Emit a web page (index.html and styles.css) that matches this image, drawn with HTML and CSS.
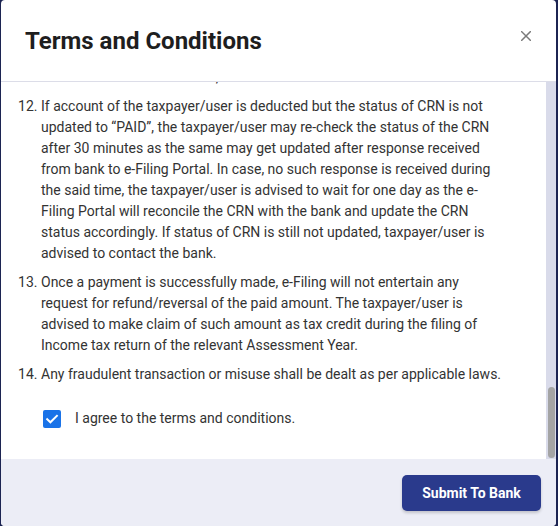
FILE: index.html
```html
<!DOCTYPE html>
<html lang="en">
<head>
<meta charset="utf-8">
<title>Terms and Conditions</title>
<link rel="stylesheet" href="styles.css">
</head>
<body>
<div class="dialog" role="dialog" aria-labelledby="dlg-title">
  <header class="dialog-header">
    <h2 id="dlg-title" class="dialog-title">Terms and Conditions</h2>
    <button class="close-btn" type="button" aria-label="Close">
      <svg width="10" height="10" viewBox="0 0 10 10" aria-hidden="true">
        <path d="M0.7 0.7 L9.3 9.3 M9.3 0.7 L0.7 9.3" stroke="currentColor" stroke-width="1.5" stroke-linecap="square" fill="none"/>
      </svg>
    </button>
  </header>

  <div class="dialog-main">
    <div class="dialog-body" id="terms-scroll">
      <div class="body-inner">
        <ol class="terms">
          <li>The e-Pay Tax service enables the taxpayer/user to generate a Challan Reference Number (CRN) and make payment of direct taxes online through Net Banking, Debit Card, Payment Gateway, RTGS/NEFT or over the counter at the branch of an authorised bank. The modes of payment available depend upon the bank selected by the taxpayer/user at the time of generating the challan form, and may be changed by the bank without prior notice. The list of authorised banks is displayed on the e-Filing Portal and is subject to revision from time to time.</li>
          <li>The taxpayer/user shall be solely responsible for the correctness of all the details furnished in the challan form, including PAN/TAN, name, Assessment Year, Major Head, Minor Head, the break-up of the tax amount into tax, surcharge, cess, interest, penalty, fee and others, and the mode of payment. Once the CRN is generated, these details cannot be modified, and the taxpayer/user is advised to verify them carefully before proceeding to payment. Any error in the details so furnished may result in the payment not being credited against the intended liability.</li>
          <li>The CRN generated on the e-Filing Portal is valid for a period of 15 days from the date of its generation. Payment against an expired CRN will not be accepted by the bank, and the taxpayer/user will be required to generate a fresh challan form and CRN for making the payment. A CRN once used for a successful payment cannot be used again for any other payment. All challans generated by the taxpayer/user can be viewed under the Generated Challans tab of e-Pay Tax.</li>
          <li>Where the taxpayer/user opts for payment through Net Banking or Debit Card, he/she will be redirected to the website of the selected bank. The e-Filing Portal does not store or have access to the login credentials, card details, one time passwords or any other banking information entered by the taxpayer/user on the website of the bank or of the payment gateway service provider. The taxpayer/user is advised to keep such credentials confidential and not to share them with any person.</li>
          <li>Charges, if any, levied by the bank or the payment gateway service provider for processing the payment shall be borne by the taxpayer/user. Such charges do not form part of the tax paid and will not be credited to the account of the taxpayer/user maintained with the Income Tax Department, nor will they be refunded under any circumstances.</li>
          <li>For payment through RTGS/NEFT, the taxpayer/user is required to take a print of the mandate form generated along with the CRN and submit it at the branch of any bank, or use it to make the payment through the net banking facility of any bank, before the expiry of the CRN. The amount transferred must be exactly the same as the amount mentioned in the challan form, and the beneficiary details must be entered as given in the mandate form. Payments made with a different amount or with incorrect beneficiary details will be returned by the bank.</li>
          <li>For payment over the counter, the taxpayer/user may make the payment in cash, cheque or demand draft at the branch of the selected authorised bank. Cash payment over the counter shall be permitted only up to the limit prescribed by the Income Tax Department from time to time. In the case of payment by cheque or demand draft, the date of payment shall be the date of realisation of the instrument, and the instrument must be presented before the expiry of the CRN.</li>
          <li>The payment shall be treated as made on the date on which the amount is debited from the account of the taxpayer/user and credited to the account of the Government, as reflected in the Challan Identification Number (CIN) generated by the bank. The CIN is the only valid proof of payment of tax and should be quoted in all correspondence relating to the payment.</li>
          <li>On successful payment, the challan receipt containing the CIN, BSR code, date of deposit and challan serial number will be available for download under the Payment History tab of e-Pay Tax. The same details may be used by the taxpayer/user while filing the Income tax return, responding to any notice or claiming credit of the tax paid. A copy of the challan receipt will also be sent to the registered e-mail ID of the taxpayer/user.</li>
          <li>The taxpayer/user is advised not to close the browser, press the back button or refresh the page while the payment is being processed, as this may result in the transaction being interrupted or the status of the CRN not being updated correctly on the e-Filing Portal. In case of any interruption, the taxpayer/user should check the status of the CRN before attempting a fresh payment.</li>
          <li>In case the payment is made from the account of a person other than the taxpayer/user, the tax so paid shall be credited only against the PAN/TAN mentioned in the challan form. No claim for credit of the amount to any other PAN/TAN shall be made to the Department, the details as stated in the above mentioned clause, shall be treated as final.</li>
          <li>If account of the taxpayer/user is deducted but the status of CRN is not updated to &ldquo;PAID&rdquo;, the taxpayer/user may re-check the status of the CRN after 30 minutes as the same may get updated after response received from bank to e-Filing Portal. In case, no such response is received during the said time, the taxpayer/user is advised to wait for one day as the e-Filing Portal will reconcile the CRN with the bank and update the CRN status accordingly. If status of CRN is still not updated, taxpayer/user is advised to contact the bank.</li>
          <li>Once a payment is successfully made, e-Filing will not entertain any request for refund/reversal of the paid amount. The taxpayer/user is advised to make claim of such amount as tax credit during the filing of Income tax return of the relevant Assessment Year.</li>
          <li>Any fraudulent transaction or misuse shall be dealt as per applicable laws.</li>
        </ol>

        <label class="agree">
          <span class="check-box" aria-hidden="true">
            <svg width="18" height="18" viewBox="0 0 18 18">
              <path d="M4.2 9.2 L7.4 12.3 L13.9 5.8" stroke="#fff" stroke-width="2" fill="none" stroke-linecap="square"/>
            </svg>
          </span>
          <span class="agree-text">I agree to the terms and conditions.</span>
        </label>
      </div>
    </div>
    <div class="scroll-track" aria-hidden="true">
      <div class="scroll-thumb"></div>
    </div>
  </div>

  <footer class="dialog-footer">
    <button class="submit-btn" type="button">Submit To Bank</button>
  </footer>
</div>
<script src="script.js"></script>
</body>
</html>
```

FILE: styles.css
```css
html, body {
  margin: 0;
  height: 100%;
}

body {
  background: #1c2452;
  font-family: Roboto, "Noto Sans", Arial, sans-serif;
  overflow: hidden;
}

.dialog {
  width: 555px;
  height: 526px;
  margin-left: 1px;
  background: #fff;
  border-radius: 4px;
  display: flex;
  flex-direction: column;
  overflow: hidden;
}

/* header */
.dialog-header {
  flex: 0 0 auto;
  height: 81px;
  border-bottom: 1px solid #dcdde8;
  display: flex;
  align-items: center;
  justify-content: space-between;
  padding: 0 25px 0 24px;
}

.dialog-title {
  margin: 0;
  font-size: 24px;
  line-height: 28px;
  font-weight: 700;
  color: #1e1e1e;
}

.close-btn {
  align-self: flex-start;
  margin-top: 31px;
  padding: 0;
  border: 0;
  background: none;
  color: #7a7a7a;
  width: 10px;
  height: 10px;
  display: flex;
  cursor: pointer;
}

/* scrolling body with its own track on the right */
.dialog-main {
  flex: 1 1 auto;
  min-height: 0;
  display: flex;
}

.dialog-body {
  flex: 1 1 auto;
  min-width: 0;
  overflow-y: auto;
  scrollbar-width: none;
  display: flex;
  flex-direction: column-reverse;
}

.scroll-track {
  flex: 0 0 10px;
  box-sizing: border-box;
  background: #d9dbea;
  padding: 1px 1px 1px 2px;
  display: flex;
  flex-direction: column;
}

.scroll-thumb {
  margin-top: auto;
  height: 70px;
  border-radius: 4px;
  background: #a4a4a4;
}

.body-inner {
  flex: 0 0 auto;
  padding: 16px 24px 30px 24px;
}

.terms {
  margin: 0;
  padding: 0 16px 0 16px;
  font-size: 14px;
  line-height: 21px;
  color: #333;
}

.terms li + li {
  margin-top: 8px;
}

.agree {
  display: flex;
  align-items: center;
  gap: 14px;
  margin: 23px 0 0 18px;
  font-size: 14px;
  line-height: 21px;
  color: #333;
  cursor: pointer;
}

.check-box {
  width: 18px;
  height: 18px;
  border-radius: 2px;
  background: #1a73e8;
  display: flex;
}

/* footer */
.dialog-footer {
  flex: 0 0 67px;
  box-sizing: border-box;
  background: #ecedf6;
  display: flex;
  justify-content: flex-end;
  align-items: flex-start;
  padding: 16px 15px 0 0;
}

.submit-btn {
  width: 139px;
  height: 36px;
  border: 0;
  border-radius: 5px;
  background: #2a3a8c;
  color: #fff;
  font-family: inherit;
  font-size: 14px;
  font-weight: 700;
  box-shadow: 0 2px 3px rgba(0, 0, 0, 0.18);
  cursor: pointer;
}
```

FILE: script.js
```js
// Keep the custom scrollbar thumb in step with the terms list.
(function () {
  var body = document.getElementById('terms-scroll');
  var track = document.querySelector('.scroll-track');
  var thumb = document.querySelector('.scroll-thumb');

  function sync() {
    var view = body.clientHeight;
    var total = body.scrollHeight;
    var room = track.clientHeight - 2;
    var size = Math.max(24, Math.round(room * view / total));
    var max = total - view;
    // column-reverse: scrollTop runs from -max (top) to 0 (bottom)
    var pos = max > 0 ? (max + body.scrollTop) / max : 1;
    thumb.style.height = size + 'px';
    thumb.style.marginTop = Math.round((room - size) * pos) + 'px';
  }

  body.addEventListener('scroll', sync);
  window.addEventListener('resize', sync);
  sync();
})();
```
